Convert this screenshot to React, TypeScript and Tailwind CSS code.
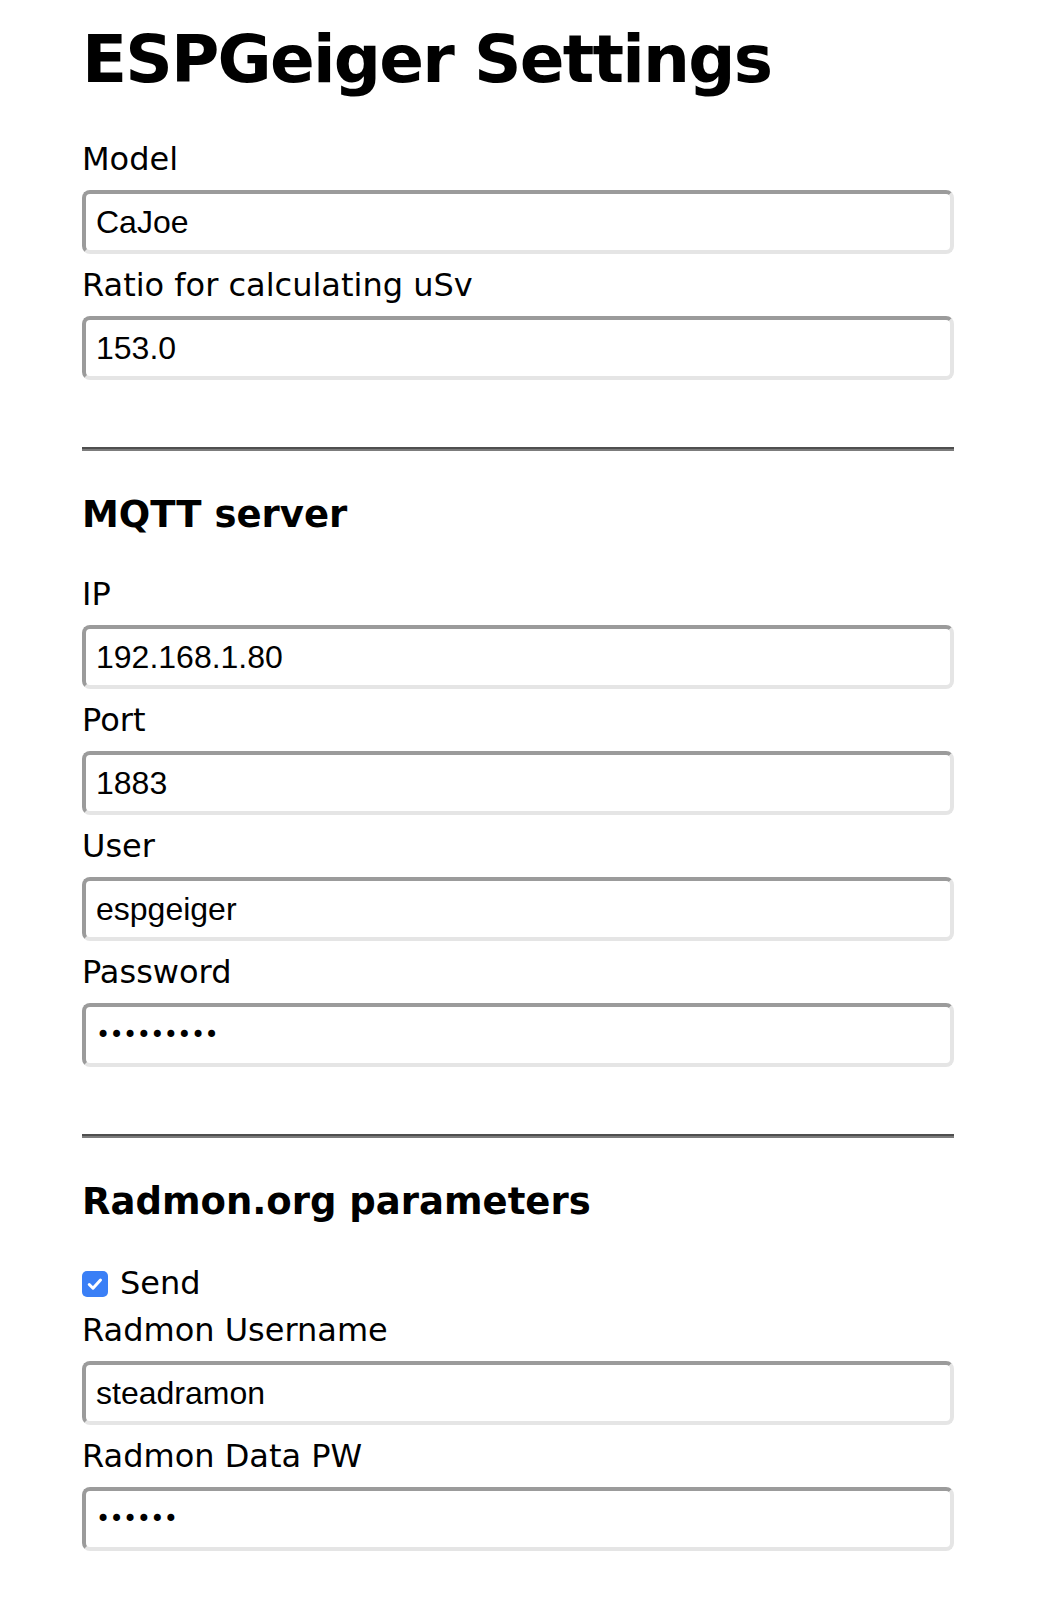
const Field = ({
	label,
	value,
	secret,
	className,
}: {
	label: string;
	value: string;
	secret?: boolean;
	className?: string;
}) => {
	return (
		<div className={className}>
			<label className="block text-[32px] leading-[37px]">{label}</label>
			<input
				type="text"
				readOnly
				defaultValue={value}
				className={
					"mt-[12px] block h-[64px] w-full rounded-[8px] border-4 border-t-[#9b9b9b] border-l-[#9b9b9b] border-r-[#e5e5e5] border-b-[#e5e5e5] bg-white px-[10px] text-black outline-none " +
					(secret ? "text-[24px] tracking-[-0.6px]" : "text-[32px]")
				}
				style={{
					fontFamily: secret
						? "'DejaVu Sans', Verdana, sans-serif"
						: "'Liberation Sans', Arial, sans-serif",
				}}
			/>
		</div>
	);
};

const Rule = () => (
	<div className="mt-[67px] h-0 border-t-2 border-b-2 border-t-[#4f4f4f] border-b-[#7c7c7c]" />
);

export default function App() {
	return (
		<div
			className="min-h-[1612px] bg-white pl-[82px] pt-[21px] text-black"
			style={{ fontFamily: "'DejaVu Sans', Verdana, sans-serif" }}
		>
			<div className="w-[872px]">
				<h1 className="text-[66px] font-bold leading-[77px] tracking-[-1.8px]">ESPGeiger Settings</h1>

				<Field className="mt-[43px]" label="Model" value="CaJoe" />
				<Field className="mt-[13px]" label="Ratio for calculating uSv" value="153.0" />

				<Rule />

				<h3 className="mt-[42px] text-[37px] font-bold leading-[43px]">MQTT server</h3>

				<Field className="mt-[40px]" label="IP" value="192.168.1.80" />
				<Field className="mt-[13px]" label="Port" value="1883" />
				<Field className="mt-[13px]" label="User" value="espgeiger" />
				<Field className="mt-[13px]" label="Password" value="•••••••••" secret />

				<Rule />

				<h3 className="mt-[42px] text-[37px] font-bold leading-[43px]">Radmon.org parameters</h3>

				<div className="mt-[42px] flex items-center gap-[12px] text-[32px] leading-[37px]">
					<span className="flex h-[26px] w-[26px] items-center justify-center rounded-[5px] bg-[#3a7ff6]">
						<svg viewBox="0 0 16 16" className="h-[20px] w-[20px]" fill="none">
							<path
								d="M3.4 8.4l3 3 6-6.6"
								stroke="white"
								strokeWidth="2.4"
								strokeLinecap="round"
								strokeLinejoin="round"
							/>
						</svg>
					</span>
					<span>Send</span>
				</div>

				<Field className="mt-[10px]" label="Radmon Username" value="steadramon" />
				<Field className="mt-[13px]" label="Radmon Data PW" value="••••••" secret />
			</div>
		</div>
	);
}
